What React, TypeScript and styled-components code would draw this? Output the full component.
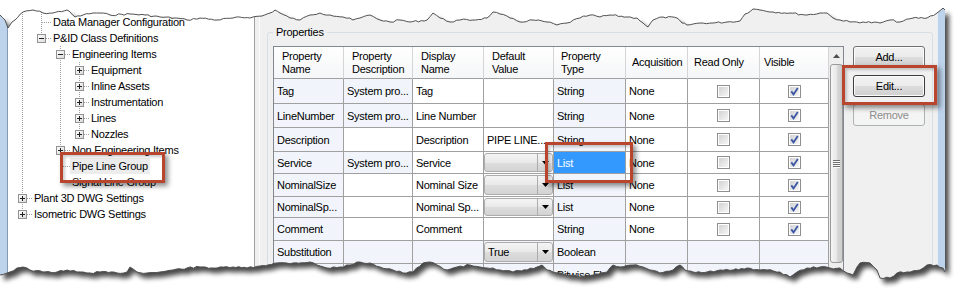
import React from 'react';
import styled, { createGlobalStyle, css } from 'styled-components';

const GlobalStyle = createGlobalStyle`
  * { box-sizing: border-box; }
  html, body { margin: 0; padding: 0; background: #fff; }
  body {
    font-family: "Liberation Sans", Arial, sans-serif;
    font-size: 11px;
    letter-spacing: -0.25px;
    color: #000;
  }
`;

// ---------- torn paper edges ----------

type Pt = [number, number];

const TOP: Pt[] = [
  [0, 15], [5, 20], [8, 28], [12, 22], [15, 20], [23, 12], [33, 10], [43, 13], [53, 13], [67, 10],
  [75, 17], [83, 15], [93, 13], [100, 13], [110, 15], [130, 14], [145, 15], [160, 17], [175, 18],
  [187, 20], [200, 18], [217, 20], [233, 18], [253, 17], [262, 16], [270, 13], [275, 10], [280, 13],
  [290, 18], [300, 20], [310, 15], [320, 13], [330, 15], [343, 17], [353, 20], [360, 18], [370, 15],
  [380, 20], [390, 22], [400, 20], [410, 22], [427, 20], [433, 13], [440, 18], [450, 22], [460, 20],
  [473, 20], [487, 18], [493, 12], [500, 14], [510, 18], [520, 22], [533, 20], [547, 22], [557, 25],
  [567, 23], [580, 18], [590, 15], [600, 17], [610, 15], [627, 17], [637, 18], [643, 23], [648, 27],
  [653, 20], [663, 17], [677, 18], [682, 23], [687, 25], [700, 23], [713, 23], [727, 22], [740, 21],
  [745, 14], [753, 9], [760, 10], [773, 12], [790, 13], [807, 15], [820, 13], [827, 13], [833, 18],
  [840, 20], [850, 22], [863, 22], [880, 23], [890, 20], [900, 22], [913, 18], [927, 18], [937, 13],
  [943, 8], [945, 10],
];

const BOTTOM: Pt[] = [
  [0, 275], [10, 272], [17, 268], [23, 267], [30, 270], [43, 272], [57, 272], [67, 270], [77, 272],
  [90, 273], [100, 272], [117, 273], [127, 272], [130, 267], [137, 272], [147, 273], [160, 272],
  [173, 270], [187, 268], [200, 267], [217, 268], [233, 267], [247, 268], [260, 266], [277, 263],
  [293, 263], [310, 262], [317, 265], [327, 268], [340, 267], [350, 265], [360, 262], [370, 263],
  [380, 267], [393, 270], [403, 273], [413, 272], [423, 263], [430, 262], [437, 265], [447, 270],
  [457, 267], [470, 265], [480, 267], [493, 268], [500, 270], [513, 272], [527, 270], [537, 267],
  [542, 265], [547, 270], [553, 272], [567, 275], [580, 277], [593, 275], [607, 272], [613, 265],
  [620, 267], [633, 265], [643, 267], [650, 270], [660, 273], [673, 270], [680, 265], [685, 270],
  [693, 272], [707, 272], [720, 270], [733, 270], [747, 268], [760, 270], [767, 270], [780, 272],
  [790, 277], [797, 272], [807, 268], [820, 267], [830, 268], [840, 268], [847, 273], [853, 275],
  [857, 267], [860, 263], [870, 263], [877, 270], [880, 278], [890, 278], [897, 273], [907, 272],
  [920, 270], [927, 265], [937, 265], [943, 268], [945, 272],
];

// add a little high frequency roughness between the traced points
function roughen(points: Pt[], seed: number): Pt[] {
  let s = seed;
  const rnd = () => {
    s = (s * 9301 + 49297) % 233280;
    return s / 233280;
  };
  const out: Pt[] = [];
  for (let i = 0; i < points.length - 1; i++) {
    const [x0, y0] = points[i];
    const [x1, y1] = points[i + 1];
    const steps = Math.max(1, Math.round((x1 - x0) / 3));
    for (let k = 0; k < steps; k++) {
      const t = k / steps;
      const j = k === 0 ? 0 : (rnd() - 0.5) * 1.8;
      out.push([x0 + (x1 - x0) * t, y0 + (y1 - y0) * t + j]);
    }
  }
  out.push(points[points.length - 1]);
  return out;
}

const fmt = (p: Pt[]) => p.map(([x, y]) => `${x.toFixed(1)} ${y.toFixed(1)}`).join(' L ');
const topEdge = roughen(TOP, 7);
const bottomEdge = roughen(BOTTOM, 13);
const PAPER = `M ${fmt(topEdge)} L ${fmt([...bottomEdge].reverse())} Z`;
const OUTSIDE = `M0 0 H962 V306 H0 Z ${PAPER}`;

const TearOverlay = styled.svg`
  position: absolute;
  left: 0;
  top: 0;
  pointer-events: none;
`;

function PaperEdges() {
  return (
    <TearOverlay width="962" height="306" viewBox="0 0 962 306">
      <defs>
        <filter id="paperShadow" x="-5%" y="-10%" width="110%" height="130%">
          <feGaussianBlur stdDeviation="2.4" />
        </filter>
        <clipPath id="outsidePaper">
          <path d={OUTSIDE} clipRule="evenodd" />
        </clipPath>
      </defs>
      <path d={OUTSIDE} fill="#fff" fillRule="evenodd" />
      <g clipPath="url(#outsidePaper)">
        <path d={PAPER} transform="translate(4 5)" fill="#000" opacity="0.72" filter="url(#paperShadow)" />
      </g>
      <path d={`M ${fmt(topEdge)}`} fill="none" stroke="#505050" strokeWidth="1" />
      <path d={`M ${fmt(bottomEdge)}`} fill="none" stroke="#505050" strokeWidth="1" />
    </TearOverlay>
  );
}

// ---------- window frame ----------

const Stage = styled.div`
  position: relative;
  width: 962px;
  height: 306px;
  overflow: hidden;
  background: #fff;
`;

const Window = styled.div`
  display: flex;
  width: 945px;
  height: 306px;
`;

const FrameEdge = styled.div<{ $side: 'left' | 'right' }>`
  flex: none;
  width: 8px;
  background: #bdd3eb;
  ${(p) =>
    p.$side === 'left'
      ? css`border-right: 1px solid #8599b3;`
      : css`border-left: 1px solid #e6eef7;`}
`;

const TreePanel = styled.div`
  flex: none;
  width: 247px;
  background: #fff;
  border-right: 1px solid #a0a0a0;
  padding-left: 5px;
  overflow: hidden;
`;

const Splitter = styled.div`
  flex: none;
  width: 4px;
  background: #f0f0f0;
`;

const RightPanel = styled.div`
  flex: none;
  width: 678px;
  background: #f0f0f0;
  border-left: 1px solid #fbfbfb;
  padding: 26px 4px 0 7px;
`;

// ---------- tree ----------

const DOT = '#a0a0a0';
const vLine = (full: boolean) =>
  `repeating-linear-gradient(to bottom, ${DOT} 0 1px, transparent 1px 2px) 9px 0 / 1px ${full ? 16 : 9}px no-repeat`;
const hLine = `repeating-linear-gradient(to right, ${DOT} 0 1px, transparent 1px 2px) 10px 8px / 9px 1px no-repeat`;

const TreeList = styled.div`
  margin-top: -2px;
  display: flex;
  flex-direction: column;
`;

const TreeRow = styled.div`
  display: flex;
  height: 16px;
`;

const IndentCell = styled.span<{ $line: boolean }>`
  flex: none;
  width: 19px;
  height: 16px;
  background: ${(p) => (p.$line ? vLine(true) : 'none')};
`;

const BranchCell = styled.span<{ $last: boolean }>`
  flex: none;
  width: 19px;
  height: 16px;
  display: flex;
  align-items: flex-start;
  padding: 4px 0 0 5px;
  background: ${(p) => `${hLine}, ${vLine(!p.$last)}`};
`;

const TreeLabel = styled.span<{ $selected?: boolean }>`
  padding: 0 2px;
  line-height: 16px;
  white-space: nowrap;
  background: ${(p) => (p.$selected ? '#ececec' : 'transparent')};
`;

function Expander({ open }: { open: boolean }) {
  return (
    <svg width="9" height="9" viewBox="0 0 9 9">
      <defs>
        <linearGradient id="expFill" x1="0" y1="0" x2="1" y2="1">
          <stop offset="0" stopColor="#ffffff" />
          <stop offset="1" stopColor="#d9d9d9" />
        </linearGradient>
      </defs>
      <rect x="0.5" y="0.5" width="8" height="8" fill="url(#expFill)" stroke="#929292" />
      <rect x="2" y="4" width="5" height="1" fill="#202020" />
      {!open && <rect x="4" y="2" width="1" height="5" fill="#202020" />}
    </svg>
  );
}

type TreeNode = {
  label: string;
  trail: boolean[];
  exp?: 'plus' | 'minus';
  last?: boolean;
  selected?: boolean;
};

const L3 = [true, false, true];
const L2 = [true, false];

const TREE: TreeNode[] = [
  { label: 'Project Paths', trail: [true] },
  { label: 'Data Manager Configuration', trail: [true] },
  { label: 'P&ID Class Definitions', trail: [true], exp: 'minus', last: true },
  { label: 'Engineering Items', trail: L2, exp: 'minus' },
  { label: 'Equipment', trail: L3, exp: 'plus' },
  { label: 'Inline Assets', trail: L3, exp: 'plus' },
  { label: 'Instrumentation', trail: L3, exp: 'plus' },
  { label: 'Lines', trail: L3, exp: 'plus' },
  { label: 'Nozzles', trail: L3, exp: 'plus', last: true },
  { label: 'Non Engineering Items', trail: L2, exp: 'plus' },
  { label: 'Pipe Line Group', trail: L2, selected: true },
  { label: 'Signal Line Group', trail: L2, last: true },
  { label: 'Plant 3D DWG Settings', trail: [], exp: 'plus' },
  { label: 'Isometric DWG Settings', trail: [], exp: 'plus', last: true },
];

function Tree() {
  return (
    <TreeList>
      {TREE.map((n) => (
        <TreeRow key={n.label}>
          {n.trail.map((line, i) => (
            <IndentCell key={i} $line={line} />
          ))}
          <BranchCell $last={!!n.last}>{n.exp && <Expander open={n.exp === 'minus'} />}</BranchCell>
          <TreeLabel $selected={n.selected}>{n.label}</TreeLabel>
        </TreeRow>
      ))}
    </TreeList>
  );
}

// ---------- properties group ----------

const GroupBox = styled.fieldset`
  margin: 0;
  width: 666px;
  height: 290px;
  min-inline-size: 0;
  border: 1px solid #d5dfe5;
  border-radius: 3px;
  padding: 7px 7px 0 5px;
`;

const GroupLabel = styled.legend`
  padding: 0 3px;
  line-height: 13px;
`;

const GroupBody = styled.div`
  display: flex;
  align-items: flex-start;
  gap: 9px;
`;

const COLS = [70, 69, 71, 70, 72, 62, 72, 69];

const GridFrame = styled.div`
  flex: none;
  display: flex;
  width: 571px;
  height: 250px;
  border: 1px solid #828790;
  background: #fff;
  overflow: hidden;
`;

const GridCells = styled.div<{ $rows: number[] }>`
  flex: none;
  width: 555px;
  display: grid;
  grid-template-columns: ${COLS.map((c) => `${c}px`).join(' ')};
  grid-template-rows: ${(p) => p.$rows.map((r) => `${r}px`).join(' ')};
  align-content: start;
`;

const HeaderCell = styled.div<{ $pad: number }>`
  display: flex;
  flex-direction: column;
  justify-content: center;
  padding-left: ${(p) => p.$pad}px;
  line-height: 13px;
  white-space: nowrap;
  border-right: 1px solid #d5d5d5;
  border-bottom: 1px solid #a0a0a0;
  background: linear-gradient(#ffffff, #f5f6f8);
`;

const Cell = styled.div<{ $shade?: boolean; $selected?: boolean; $center?: boolean; $flush?: boolean }>`
  display: flex;
  align-items: ${(p) => (p.$flush ? 'stretch' : 'center')};
  justify-content: ${(p) => (p.$center ? 'center' : 'flex-start')};
  min-width: 0;
  padding: ${(p) => (p.$flush ? '1px 0' : '0 3px')};
  white-space: nowrap;
  overflow: hidden;
  border-right: 1px solid #a0a0a0;
  border-bottom: 1px solid #a0a0a0;
  background: ${(p) => (p.$selected ? '#3399ff' : p.$shade ? '#f1f5fb' : '#fff')};
  color: ${(p) => (p.$selected ? '#fff' : '#000')};
`;

const Combo = styled.div`
  flex: 1;
  display: flex;
  border: 1px solid #acacac;
  border-radius: 3px;
  background: linear-gradient(#f4f4f4, #e9e9e9 50%, #dddddd 51%, #d3d3d3);
`;

const ComboValue = styled.span`
  flex: 1;
  display: flex;
  align-items: center;
  padding-left: 3px;
`;

const ComboButton = styled.span`
  flex: none;
  width: 15px;
  display: flex;
  align-items: center;
  justify-content: center;
  border-left: 1px solid #acacac;
`;

function DropArrow() {
  return (
    <svg width="7" height="4" viewBox="0 0 7 4">
      <path d="M0 0 H7 L3.5 4 Z" fill="#000" />
    </svg>
  );
}

function CheckBox({ checked }: { checked: boolean }) {
  return (
    <svg width="13" height="13" viewBox="0 0 13 13">
      <defs>
        <linearGradient id="cbFill" x1="0" y1="0" x2="1" y2="1">
          <stop offset="0" stopColor="#d2d2d2" />
          <stop offset="1" stopColor="#f6f6f6" />
        </linearGradient>
      </defs>
      <rect x="0.5" y="0.5" width="12" height="12" fill="#fff" stroke="#8f8f8f" />
      <rect x="2" y="2" width="9" height="9" fill="url(#cbFill)" />
      {checked && (
        <path d="M3.3 6.4 L5.5 9.4 L9.8 3" fill="none" stroke="#3a56a5" strokeWidth="1.8" />
      )}
    </svg>
  );
}

const ScrollBar = styled.div`
  flex: none;
  width: 14px;
  display: flex;
  flex-direction: column;
  background: #eeeeee;
`;

const ScrollArrow = styled.div`
  height: 17px;
  display: flex;
  align-items: center;
  justify-content: center;
`;

const ScrollThumb = styled.div`
  height: 199px;
  margin-left: 1px;
  border: 1px solid #9a9a9a;
  border-radius: 3px;
  display: flex;
  align-items: center;
  justify-content: center;
  background: linear-gradient(to right, #f5f5f5, #e8e8e8 50%, #d9d9d9 51%, #cdcdcd);
`;

function Grip() {
  return (
    <svg width="7" height="8" viewBox="0 0 7 8">
      {[0, 2, 4, 6].map((y) => (
        <g key={y}>
          <rect x="0" y={y} width="7" height="1" fill="#6f6f6f" />
          <rect x="1" y={y + 1} width="6" height="1" fill="#fbfbfb" />
        </g>
      ))}
    </svg>
  );
}

const HEADERS: { lines: string[]; pad: number }[] = [
  { lines: ['Property', 'Name'], pad: 8 },
  { lines: ['Property', 'Description'], pad: 8 },
  { lines: ['Display', 'Name'], pad: 8 },
  { lines: ['Default', 'Value'], pad: 8 },
  { lines: ['Property', 'Type'], pad: 7 },
  { lines: ['Acquisition'], pad: 6 },
  { lines: ['Read Only'], pad: 6 },
  { lines: ['Visible'], pad: 4 },
];

type RowDef = {
  h: number;
  name: string;
  desc?: string;
  display?: string;
  def?: string;
  combo?: boolean;
  type: string;
  acq?: string;
  checks?: boolean;
  readOnlyRow?: boolean;
  selectType?: boolean;
};

const ROWS: RowDef[] = [
  { h: 25, name: 'Tag', desc: 'System pro...', display: 'Tag', type: 'String', acq: 'None', checks: true },
  { h: 24, name: 'LineNumber', desc: 'System pro...', display: 'Line Number', type: 'String', acq: 'None', checks: true },
  { h: 24, name: 'Description', display: 'Description', def: 'PIPE LINE...', type: 'String', acq: 'None', checks: true },
  { h: 22, name: 'Service', desc: 'System pro...', display: 'Service', combo: true, type: 'List', acq: 'None', checks: true, selectType: true },
  { h: 23, name: 'NominalSize', display: 'Nominal Size', combo: true, type: 'List', acq: 'None', checks: true },
  { h: 21, name: 'NominalSp...', display: 'Nominal Sp...', combo: true, type: 'List', acq: 'None', checks: true },
  { h: 23, name: 'Comment', display: 'Comment', type: 'String', acq: 'None', checks: true },
  { h: 23, name: 'Substitution', combo: true, def: 'True', type: 'Boolean', readOnlyRow: true },
  { h: 23, name: '', def: '0', type: 'Bitwise Fl...', readOnlyRow: true },
];

function PropertyGrid() {
  return (
    <GridFrame>
      <GridCells $rows={[32, ...ROWS.map((r) => r.h)]}>
        {HEADERS.map((h) => (
          <HeaderCell key={h.lines.join(' ')} $pad={h.pad}>
            {h.lines.map((l) => (
              <span key={l}>{l}</span>
            ))}
          </HeaderCell>
        ))}
        {ROWS.map((r, i) => {
          const all = !!r.readOnlyRow;
          return (
            <React.Fragment key={i}>
              <Cell $shade>{r.name}</Cell>
              <Cell $shade={all || !!r.desc}>{r.desc}</Cell>
              <Cell $shade={all}>{r.display}</Cell>
              {r.combo ? (
                <Cell $shade={all} $flush>
                  <Combo>
                    <ComboValue>{r.def}</ComboValue>
                    <ComboButton>
                      <DropArrow />
                    </ComboButton>
                  </Combo>
                </Cell>
              ) : (
                <Cell $shade={all}>{r.def}</Cell>
              )}
              <Cell $shade $selected={r.selectType}>
                {r.type}
              </Cell>
              <Cell $shade={all}>{r.acq}</Cell>
              <Cell $shade={all} $center>
                {r.checks && <CheckBox checked={false} />}
              </Cell>
              <Cell $shade={all} $center>
                {r.checks && <CheckBox checked />}
              </Cell>
            </React.Fragment>
          );
        })}
      </GridCells>
      <ScrollBar>
        <ScrollArrow>
          <svg width="7" height="4" viewBox="0 0 7 4">
            <path d="M0 4 L3.5 0 L7 4 Z" fill="#505050" />
          </svg>
        </ScrollArrow>
        <ScrollThumb>
          <Grip />
        </ScrollThumb>
      </ScrollBar>
    </GridFrame>
  );
}

const ButtonColumn = styled.div`
  flex: none;
  width: 72px;
  display: flex;
  flex-direction: column;
  gap: 7px;
`;

const PushButton = styled.button<{ $default?: boolean }>`
  height: 22px;
  padding: 0;
  font: inherit;
  letter-spacing: inherit;
  color: #000;
  border: 1px solid ${(p) => (p.$default ? '#3c3c3c' : '#707070')};
  border-radius: 3px;
  background: linear-gradient(#f2f2f2, #ebebeb 50%, #dddddd 51%, #cfcfcf);
  box-shadow: inset 0 0 0 1px #fcfcfc;

  &:disabled {
    color: #8d8d8d;
    border-color: #adb2b5;
    background: #f4f4f4;
    box-shadow: none;
  }
`;

// ---------- callouts ----------

const Callout = styled.div<{ $x: number; $y: number; $w: number; $h: number }>`
  position: absolute;
  left: ${(p) => p.$x}px;
  top: ${(p) => p.$y}px;
  width: ${(p) => p.$w}px;
  height: ${(p) => p.$h}px;
  border: 3px solid #b8462f;
  box-shadow: 3px 3px 5px rgba(0, 0, 0, 0.45), inset 2px 2px 3px rgba(0, 0, 0, 0.2);
  pointer-events: none;
`;

export default function App() {
  return (
    <>
      <GlobalStyle />
      <Stage>
        <Window>
          <FrameEdge $side="left" />
          <TreePanel>
            <Tree />
          </TreePanel>
          <Splitter />
          <RightPanel>
            <GroupBox>
              <GroupLabel>Properties</GroupLabel>
              <GroupBody>
                <PropertyGrid />
                <ButtonColumn>
                  <PushButton>Add...</PushButton>
                  <PushButton $default>Edit...</PushButton>
                  <PushButton disabled>Remove</PushButton>
                </ButtonColumn>
              </GroupBody>
            </GroupBox>
          </RightPanel>
          <FrameEdge $side="right" />
        </Window>
        <Callout $x={60} $y={152} $w={105} $h={31} />
        <Callout $x={545} $y={142} $w={88} $h={41} />
        <Callout $x={842} $y={65} $w={95} $h={40} />
        <PaperEdges />
      </Stage>
    </>
  );
}
